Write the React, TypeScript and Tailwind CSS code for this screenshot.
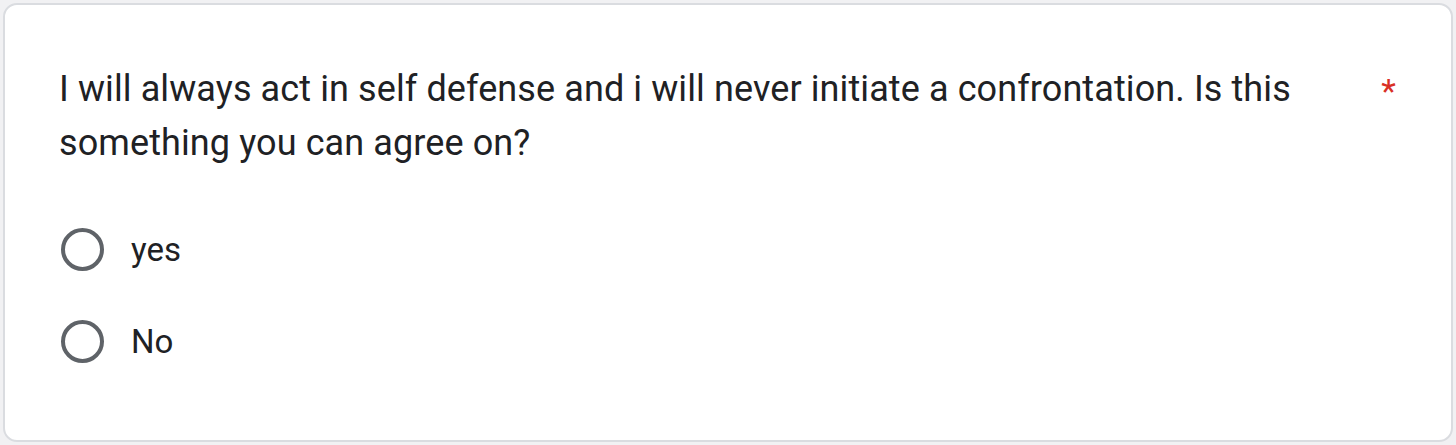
export default function App() {
  const options = ['yes', 'No']
  return (
    <div className="h-[445px] w-[1456px] bg-[#f1f1f3] p-[3px]" style={{ fontFamily: 'Roboto, sans-serif' }}>
      <div className="h-full rounded-[14px] border-2 border-[#dadce0] bg-white pl-[54px] pr-[55px] pt-[57px]">
        <div className="flex items-start justify-between">
          <p className="max-w-[1300px] text-[36px] leading-[54px] tracking-[0.1px] text-[#202124]">
            I will always act in self defense and i will never initiate a confrontation. Is this something you can agree on?
          </p>
          <span className="mt-[2px] text-[34px] leading-[54px] text-[#d93025]">*</span>
        </div>
        <div className="ml-[2px] mt-[58px] flex flex-col gap-[49px]">
          {options.map(o => (
            <label key={o} className="flex items-center gap-[27px]">
              <span className="h-[43px] w-[43px] rounded-full border-4 border-[#5f6368]" />
              <span className="text-[33px] leading-[42px] text-[#202124]">{o}</span>
            </label>
          ))}
        </div>
      </div>
    </div>
  )
}
